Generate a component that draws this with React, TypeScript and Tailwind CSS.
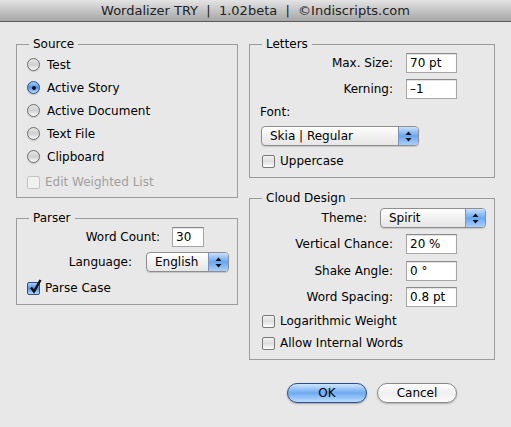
import React from 'react';

const font = { fontFamily: '"DejaVu Sans", Verdana, sans-serif' };

const Radio = ({ label, checked }: { label: string; checked?: boolean }) => (
  <div className="flex items-center h-[23px] pl-[10px]">
    {checked ? (
      <span className="w-[13px] h-[13px] rounded-full border border-[#2f4f86] bg-gradient-to-b from-[#a9cdf6] via-[#4f93e6] to-[#b5dcff] flex items-center justify-center shadow-[0_1px_1px_rgba(0,0,0,0.2)]">
        <span className="w-[4px] h-[4px] rounded-full bg-[#111]" />
      </span>
    ) : (
      <span className="w-[13px] h-[13px] rounded-full border border-[#6e6e6e] bg-gradient-to-b from-[#e6e6e6] via-[#d0d0d0] to-[#fbfbfb] shadow-[0_1px_1px_rgba(0,0,0,0.15)]" />
    )}
    <span className="ml-[7px]">{label}</span>
  </div>
);

const Check = ({ label, checked, disabled, className = '' }: { label: string; checked?: boolean; disabled?: boolean; className?: string }) => (
  <div className={`flex items-center h-[16px] ${className}`}>
    <span
      className={`relative w-[13px] h-[13px] rounded-[2px] border ${
        checked
          ? 'border-[#2f4f86] bg-gradient-to-b from-[#a9cdf6] via-[#4f93e6] to-[#b5dcff]'
          : disabled
          ? 'border-[#c4c4c4] bg-[#f0f0f0]'
          : 'border-[#7a7a7a] bg-gradient-to-b from-[#f0f0f0] via-[#dedede] to-[#fdfdfd]'
      }`}
    >
      {checked && (
        <svg className="absolute left-[1px] top-[-4px]" width="13" height="15" viewBox="0 0 13 15">
          <path d="M2 8.5 L5 12.5 L11.5 1" fill="none" stroke="#111" strokeWidth="2.4" />
        </svg>
      )}
    </span>
    <span className={`ml-[5px] ${disabled ? 'text-[#a0a0a0]' : ''}`}>{label}</span>
  </div>
);

const Field = ({ value, w }: { value: string; w: string }) => (
  <div className={`${w} h-[20px] bg-white border border-[#a5a5a5] border-t-[#8a8a8a] shadow-[inset_0_1px_1px_rgba(0,0,0,0.12)] pl-[3px] flex items-center`}>
    {value}
  </div>
);

const Popup = ({ value, w }: { value: string; w: string }) => (
  <div className={`${w} h-[20px] rounded-[4px] border border-[#8e8e8e] bg-gradient-to-b from-[#ffffff] via-[#f1f1f1] to-[#e6e6e6] shadow-[0_1px_1px_rgba(0,0,0,0.15)] flex items-stretch overflow-hidden`}>
    <span className="flex-1 flex items-center pl-[8px]">{value}</span>
    <span className="w-[20px] border-l border-[#7c93b8] bg-gradient-to-b from-[#c9e0fa] via-[#6aa6ef] to-[#a8d0fb] flex items-center justify-center">
      <svg width="7" height="11" viewBox="0 0 7 11">
        <path d="M3.5 0.5 L6.5 4 L0.5 4 Z" fill="#111" />
        <path d="M3.5 10.5 L6.5 7 L0.5 7 Z" fill="#111" />
      </svg>
    </span>
  </div>
);

const Group = ({ title, className, children }: { title: string; className: string; children: React.ReactNode }) => (
  <fieldset className={`border border-[#9b9b9b] ${className}`}>
    <legend className="ml-[12px] px-[4px] leading-[16px]">{title}</legend>
    {children}
  </fieldset>
);

const Row = ({ label, lw, gap, className = '', children }: { label: string; lw: string; gap: string; className?: string; children: React.ReactNode }) => (
  <div className={`flex items-center pl-[10px] ${className}`}>
    <span className={`${lw} text-right`}>{label}</span>
    <span className={gap}>{children}</span>
  </div>
);

export default function App() {
  return (
    <div className="w-[511px] h-[427px] bg-[#e8e8e8] text-[12px] text-black flex flex-col" style={font}>
      <div className="h-[22px] border-b border-[#5a5a5a] bg-gradient-to-b from-[#e4e4e4] to-[#a6a6a6] flex items-center justify-center text-[13px] text-[#222]">
        Wordalizer TRY&nbsp; | &nbsp;1.02beta&nbsp; | &nbsp;©Indiscripts.com
      </div>

      <div className="flex gap-[11px] pl-[16px] pt-[14px]">
        <div className="w-[222px] flex flex-col gap-[12px]">
          <Group title="Source" className="h-[162px] pt-[1px]">
            <Radio label="Test" />
            <Radio label="Active Story" checked />
            <Radio label="Active Document" />
            <Radio label="Text File" />
            <Radio label="Clipboard" />
            <Check label="Edit Weighted List" disabled className="pl-[10px] mt-[6px]" />
          </Group>

          <Group title="Parser" className="h-[95px]">
            <Row label="Word Count:" lw="w-[133px]" gap="ml-[12px]" className="mt-[1px]">
              <Field value="30" w="w-[32px]" />
            </Row>
            <Row label="Language:" lw="w-[105px]" gap="ml-[14px]" className="mt-[5px]">
              <Popup value="English" w="w-[83px]" />
            </Row>
            <Check label="Parse Case" checked className="pl-[10px] mt-[8px]" />
          </Group>
        </div>

        <div className="w-[246px] flex flex-col gap-[12px]">
          <Group title="Letters" className="h-[142px]">
            <Row label="Max. Size:" lw="w-[133px]" gap="ml-[13px]" className="mt-[1px]">
              <Field value="70 pt" w="w-[51px]" />
            </Row>
            <Row label="Kerning:" lw="w-[133px]" gap="ml-[13px]" className="mt-[6px]">
              <Field value="–1" w="w-[51px]" />
            </Row>
            <div className="pl-[10px] mt-[5px] h-[16px] flex items-center">Font:</div>
            <div className="pl-[11px] mt-[6px]">
              <Popup value="Skia | Regular" w="w-[158px]" />
            </div>
            <Check label="Uppercase" className="pl-[12px] mt-[7px]" />
          </Group>

          <Group title="Cloud Design" className="h-[170px]">
            <Row label="Theme:" lw="w-[107px]" gap="ml-[13px]" className="mt-[2px]">
              <Popup value="Spirit" w="w-[106px]" />
            </Row>
            <Row label="Vertical Chance:" lw="w-[133px]" gap="ml-[13px]" className="mt-[6px]">
              <Field value="20 %" w="w-[51px]" />
            </Row>
            <Row label="Shake Angle:" lw="w-[133px]" gap="ml-[13px]" className="mt-[7px]">
              <Field value="0 °" w="w-[51px]" />
            </Row>
            <Row label="Word Spacing:" lw="w-[133px]" gap="ml-[13px]" className="mt-[6px]">
              <Field value="0.8 pt" w="w-[51px]" />
            </Row>
            <Check label="Logarithmic Weight" className="pl-[12px] mt-[6px]" />
            <Check label="Allow Internal Words" className="pl-[12px] mt-[6px]" />
          </Group>
        </div>
      </div>

      <div className="flex gap-[10px] pl-[287px] mt-[23px]">
        <button className="w-[80px] h-[20px] rounded-full border border-[#2c4d88] bg-gradient-to-b from-[#cfe4fb] via-[#6eaaf0] to-[#b9dcff] shadow-[0_1px_2px_rgba(0,0,0,0.3)] flex items-center justify-center">
          OK
        </button>
        <button className="w-[80px] h-[20px] rounded-full border border-[#8a8a8a] bg-gradient-to-b from-[#ffffff] via-[#f0f0f0] to-[#fbfbfb] shadow-[0_1px_2px_rgba(0,0,0,0.25)] flex items-center justify-center">
          Cancel
        </button>
      </div>
    </div>
  );
}
